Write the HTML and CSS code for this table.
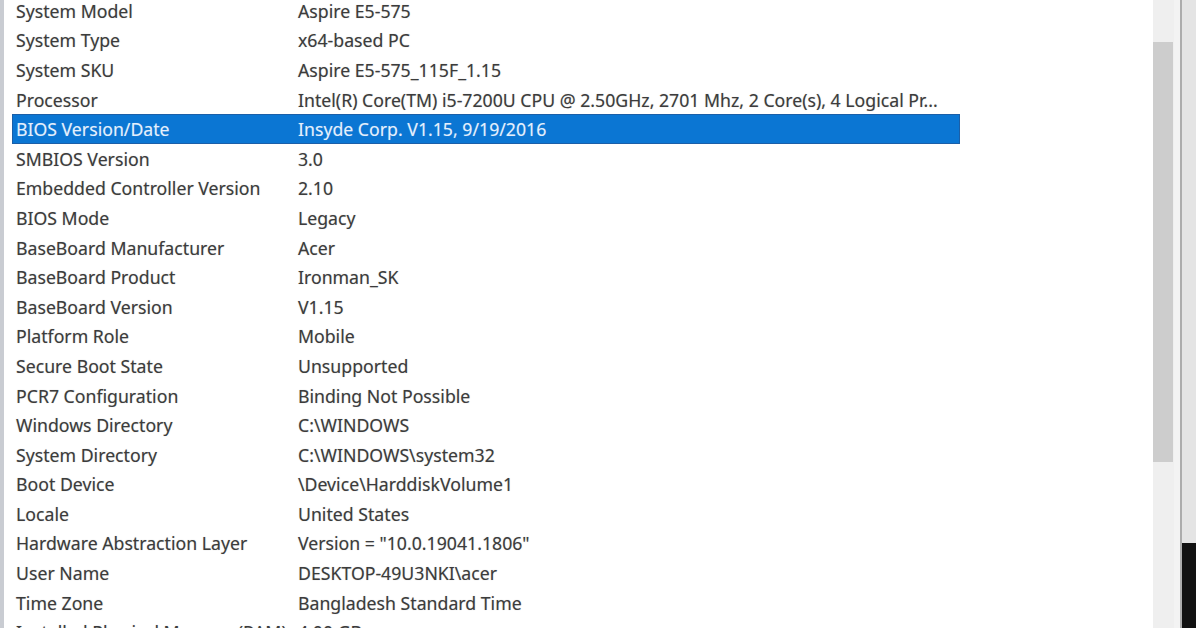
FILE: index.html
```html
<!DOCTYPE html>
<html>
<head>
<meta charset="utf-8">
<link rel="stylesheet" href="styles.css">
</head>
<body>
<div class="window">
  <div class="edge"></div>
  <div class="list">
    <div class="rows">
      <div class="row"><span>System Model</span><span>Aspire E5-575</span></div>
      <div class="row"><span>System Type</span><span>x64-based PC</span></div>
      <div class="row"><span>System SKU</span><span>Aspire E5-575_115F_1.15</span></div>
      <div class="row"><span>Processor</span><span>Intel(R) Core(TM) i5-7200U CPU @ 2.50GHz, 2701 Mhz, 2 Core(s), 4 Logical Pr...</span></div>
      <div class="row selected"><span>BIOS Version/Date</span><span>Insyde Corp. V1.15, 9/19/2016</span></div>
      <div class="row"><span>SMBIOS Version</span><span>3.0</span></div>
      <div class="row"><span>Embedded Controller Version</span><span>2.10</span></div>
      <div class="row"><span>BIOS Mode</span><span>Legacy</span></div>
      <div class="row"><span>BaseBoard Manufacturer</span><span>Acer</span></div>
      <div class="row"><span>BaseBoard Product</span><span>Ironman_SK</span></div>
      <div class="row"><span>BaseBoard Version</span><span>V1.15</span></div>
      <div class="row"><span>Platform Role</span><span>Mobile</span></div>
      <div class="row"><span>Secure Boot State</span><span>Unsupported</span></div>
      <div class="row"><span>PCR7 Configuration</span><span>Binding Not Possible</span></div>
      <div class="row"><span>Windows Directory</span><span>C:\WINDOWS</span></div>
      <div class="row"><span>System Directory</span><span>C:\WINDOWS\system32</span></div>
      <div class="row"><span>Boot Device</span><span>\Device\HarddiskVolume1</span></div>
      <div class="row"><span>Locale</span><span>United States</span></div>
      <div class="row"><span>Hardware Abstraction Layer</span><span>Version = "10.0.19041.1806"</span></div>
      <div class="row"><span>User Name</span><span>DESKTOP-49U3NKI\acer</span></div>
      <div class="row"><span>Time Zone</span><span>Bangladesh Standard Time</span></div>
      <div class="row"><span>Installed Physical Memory (RAM)</span><span>4.00 GB</span></div>
    </div>
  </div>
  <div class="scrollbar"><div class="thumb"></div></div>
  <div class="divider"></div>
  <div class="side"><div class="side-top"></div><div class="side-bottom"></div></div>
</div>
</body>
</html>
```

FILE: styles.css
```css
html, body {
  margin: 0;
  padding: 0;
  background: #ffffff;
}
.window {
  display: flex;
  width: 1196px;
  height: 628px;
  overflow: hidden;
  font-family: "Noto Sans", "Open Sans", sans-serif;
  font-size: 17.7px;
  color: #3c3c3c;
}
.edge {
  width: 4px;
  background: #c9ccd2;
  flex: none;
}
.list {
  flex: none;
  width: 1149px;
  background: #fff;
  overflow: hidden;
}
.rows {
  margin-top: -4px;
}
.row {
  display: grid;
  grid-template-columns: 282px 1fr;
  align-items: center;
  width: 944px;
  height: 29.6px;
  margin-left: 8px;
  padding-left: 4px;
  white-space: nowrap;
  text-shadow: 0 0 1px rgba(60,60,60,0.35);
}
.row.selected {
  background: #0b76d3;
  color: #e4effc;
  box-shadow: inset 0 0 0 1px #1b5fa8;
  text-shadow: 0 0 1px rgba(255,255,255,0.3);
}
.scrollbar {
  width: 21px;
  flex: none;
  background: #efefef;
  padding-top: 42px;
  box-sizing: border-box;
}
.thumb {
  width: 20px;
  height: 420px;
  background: #cdcdcd;
}
.divider {
  width: 8px;
  flex: none;
  background: #f3f3f3;
  border-right: 2px solid #acacac;
  box-sizing: border-box;
}
.side {
  flex: none;
  width: 14px;
  display: flex;
  flex-direction: column;
}
.side-top {
  height: 543px;
  background: #e4e4e4;
}
.side-bottom {
  flex: 1;
  background: #111;
}
```
